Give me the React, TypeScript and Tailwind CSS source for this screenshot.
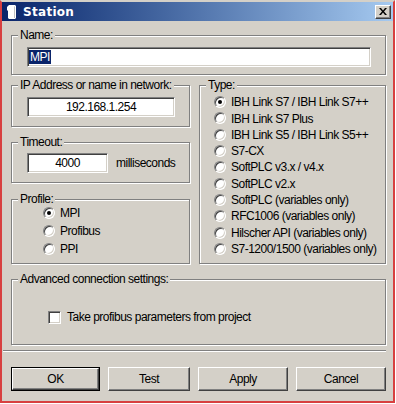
import type { ReactNode } from "react";

const sunken =
  "border border-t-[#808080] border-l-[#808080] border-b-white border-r-white shadow-[inset_1px_1px_0_#404040,inset_-1px_-1px_0_#d4d0c8]";

const raised =
  "border border-t-white border-l-white border-b-[#404040] border-r-[#404040] shadow-[inset_-1px_-1px_0_#808080,inset_1px_1px_0_#d4d0c8]";

const types = [
  "IBH Link S7 / IBH Link S7++",
  "IBH Link S7 Plus",
  "IBH Link S5 / IBH Link S5++",
  "S7-CX",
  "SoftPLC v3.x / v4.x",
  "SoftPLC v2.x",
  "SoftPLC (variables only)",
  "RFC1006 (variables only)",
  "Hilscher API (variables only)",
  "S7-1200/1500 (variables only)",
];

const profiles = ["MPI", "Profibus", "PPI"];

function Group({
  label,
  className = "",
  children,
}: {
  label: string;
  className?: string;
  children?: ReactNode;
}) {
  return (
    <div
      className={`relative border border-[#808080] shadow-[inset_1px_1px_0_#fff,1px_1px_0_#fff] ${className}`}
    >
      <span className="absolute left-[6px] top-[-8px] bg-[#d4d0c8] px-[2px] leading-[14px] whitespace-nowrap">
        {label}
      </span>
      {children}
    </div>
  );
}

function Radio({ checked = false }: { checked?: boolean }) {
  return (
    <span
      className={`flex items-center justify-center w-[12px] h-[12px] shrink-0 rounded-full bg-white ${sunken}`}
    >
      {checked && <span className="w-[4px] h-[4px] rounded-full bg-black" />}
    </span>
  );
}

function Button({ label, primary = false, width }: { label: string; primary?: boolean; width: string }) {
  return (
    <div className={`${width} h-[24px] ${primary ? "border border-black" : ""}`}>
      <div className={`h-full flex items-center justify-center ${raised}`}>{label}</div>
    </div>
  );
}

export default function App() {
  return (
    <div className="w-[396px] h-[404px] bg-white font-['Liberation_Sans',Arial,sans-serif] text-[12px] tracking-[-0.5px] text-black">
      <div className="w-[395px] h-[403px] bg-[#d4d0c8] border-x-2 border-b-2 border-x-[#d84040] border-b-[#d84040] border-t-2 border-t-[#d4d0c8] flex flex-col">
        {/* Title bar */}
        <div className="h-[19px] flex items-center bg-gradient-to-r from-[#0a246a] to-[#a6caf0] pl-[5px] pr-[2px]">
          <svg width="10" height="14" viewBox="0 0 10 14">
            <path d="M2 0h6l1 1v12l-1 1H2l-1-1V6L0 5V2l1-1z" fill="#fff" />
            <path d="M8 1v12H7V2z" fill="#c0c0c0" />
          </svg>
          <span className="ml-[6px] font-['DejaVu_Sans',sans-serif] font-bold text-[12px] tracking-[0.3px] text-white leading-none">
            Station
          </span>
          <div className={`ml-auto w-[16px] h-[14px] bg-[#d4d0c8] flex items-center justify-center ${raised}`}>
            <svg width="8" height="7" viewBox="0 0 8 7">
              <path d="M0 0h2l2 2.5L6 0h2L5 3.5 8 7H6L4 4.5 2 7H0l3-3.5z" fill="#000" />
            </svg>
          </div>
        </div>

        <div className="flex flex-col pl-[9px] pr-[7px]">
          {/* Name */}
          <Group label="Name:" className="mt-[14px] h-[40px] pt-[11px] pl-[15px]">
            <div className={`w-[344px] h-[20px] bg-white flex items-center pl-[1px] ${sunken}`}>
              <span className="bg-[#0a246a] text-white px-[1px] leading-[14px]">MPI</span>
            </div>
          </Group>

          <div className="flex gap-[9px] mt-[10px]">
            <div className="w-[179px] flex flex-col">
              <Group label="IP Address or name in network:" className="h-[42px] pt-[11px] pl-[15px]">
                <div className={`w-[148px] h-[20px] bg-white flex items-center justify-center ${sunken}`}>
                  192.168.1.254
                </div>
              </Group>
              <Group label="Timeout:" className="mt-[15px] h-[41px] pt-[10px] pl-[15px]">
                <div className="flex items-center">
                  <div className={`w-[81px] h-[20px] bg-white flex items-center justify-center ${sunken}`}>
                    4000
                  </div>
                  <span className="ml-[8px]">milliseconds</span>
                </div>
              </Group>
              <Group label="Profile:" className="mt-[16px] h-[65px] pt-[4px] pl-[31px]">
                {profiles.map((p, i) => (
                  <div key={p} className="h-[18px] flex items-center gap-[5px]">
                    <Radio checked={i === 0} />
                    <span>{p}</span>
                  </div>
                ))}
              </Group>
            </div>

            <Group label="Type:" className="flex-1 h-[179px] pt-[8px] pl-[14px]">
              {types.map((t, i) => (
                <div key={t} className="h-[16.33px] flex items-center gap-[5px]">
                  <Radio checked={i === 0} />
                  <span className="whitespace-nowrap">{t}</span>
                </div>
              ))}
            </Group>
          </div>

          {/* Advanced */}
          <Group label="Advanced connection settings:" className="mt-[15px] h-[66px] pt-[28px] pl-[36px]">
            <div className="flex items-center gap-[6px]">
              <span className={`w-[13px] h-[13px] bg-white shrink-0 ${sunken}`} />
              <span>Take profibus parameters from project</span>
            </div>
          </Group>

          <div className="mt-[5px] -ml-[8px] h-[2px] border-t border-t-[#808080] border-b border-b-white" />

          <div className="mt-[15px] flex gap-[8px]">
            <Button label="OK" primary width="w-[89px]" />
            <Button label="Test" width="w-[82px]" />
            <Button label="Apply" width="w-[90px]" />
            <Button label="Cancel" width="w-[90px]" />
          </div>
        </div>
      </div>
    </div>
  );
}
